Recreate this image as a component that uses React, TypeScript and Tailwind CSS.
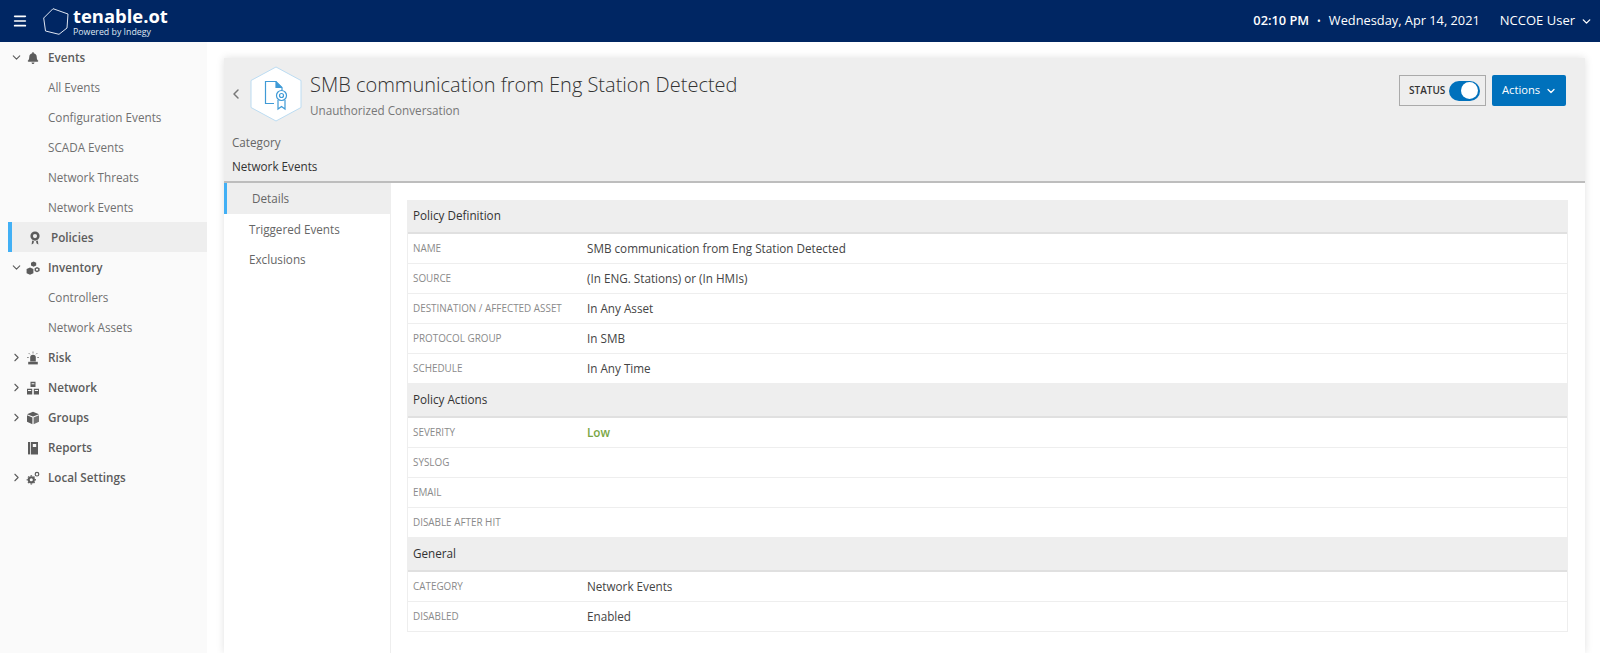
import React from "react";
import { FaBell } from "react-icons/fa";
import { ChevronDown, ChevronRight, ChevronLeft, Menu } from "lucide-react";

const box = "w-[14px] h-[14px]";
const Medal = () => (
  <svg viewBox="0 0 14 14" className={box} fill="currentColor">
    <path fillRule="evenodd" d="M7 0.5a4.6 4.6 0 1 1 0 9.2a4.6 4.6 0 0 1 0-9.2zM7 3a2.1 2.1 0 1 0 0 4.2A2.1 2.1 0 0 0 7 3z" />
    <path d="M4.2 9.5L3.6 13.5L5.4 12.4L6 10.2zM9.8 9.5L10.4 13.5L8.6 12.4L8 10.2z" />
  </svg>
);
const Cubes = () => (
  <svg viewBox="0 0 14 14" className={box} fill="currentColor">
    <path d="M7.6 0.6L10.2 1.8V4.6L7.6 5.8L5 4.6V1.8z" />
    <path d="M4 6.4L7.4 8V12.2L4 13.8L0.6 12.2V8z" />
    <path fillRule="evenodd" d="M11 6L13.6 7.2V10L11 11.2L8.6 10V7.2zM11 7.5L10 8V9.2L11 9.7L12.1 9.2V8z" />
  </svg>
);
const Siren = () => (
  <svg viewBox="0 0 14 14" className={box} fill="currentColor">
    <path d="M4.2 6.5a2.8 2.8 0 0 1 5.6 0V10.5H4.2z" />
    <rect x="2.2" y="10.8" width="9.6" height="2.6" />
    <path d="M7 0.5v2M2.6 2l1.3 1.3M11.4 2L10.1 3.3M1 6.5h1.8M11.2 6.5H13" stroke="currentColor" strokeWidth="0.7" fill="none" />
  </svg>
);
const Net = () => (
  <svg viewBox="0 0 14 14" className={box} fill="currentColor">
    <path fillRule="evenodd" d="M4.5 0.8H9.5V6H4.5zM5.6 2.2V3.2H8.4V2.2z" />
    <path fillRule="evenodd" d="M1 7.8H6.2V13.4H1zM2 9V10H5.2V9z" />
    <path fillRule="evenodd" d="M7.8 7.8H13V13.4H7.8zM8.8 9V10H12V9z" />
  </svg>
);
const Box = () => (
  <svg viewBox="0 0 14 14" className={box} fill="currentColor">
    <path d="M7 0.8L13 3.2L7 5.6L1 3.2z" />
    <path d="M1 4.3L6.4 6.5V13.2L1 10.8z" />
    <path d="M13 4.3L7.6 6.5V13.2L13 10.8z" opacity="0.85" />
  </svg>
);
const Notebook = () => (
  <svg viewBox="0 0 14 14" className={box} fill="currentColor">
    <rect x="2" y="1" width="2" height="12.4" />
    <path fillRule="evenodd" d="M4.8 1H12V13.4H4.8zM6.8 3v3h3.4V3z" />
  </svg>
);
const Gears = () => (
  <svg viewBox="0 0 14 14" className={box} fill="none" stroke="currentColor">
    <circle cx="5.3" cy="8.8" r="2.6" strokeWidth="2.1" />
    <g strokeWidth="1.6">
      <path d="M5.3 4.2v1M5.3 12.4v1M.7 8.8h1M8.9 8.8h1M2.1 5.6l.7.7M7.8 11.3l.7.7M8.5 5.6l-.7.7M2.8 11.3l-.7.7" />
    </g>
    <circle cx="11" cy="3.2" r="1.8" strokeWidth="1.2" />
  </svg>
);

type Item = { label: string; icon?: React.ReactNode; chev?: "down" | "right"; sub?: boolean; active?: boolean };
const items: Item[] = [
  { label: "Events", icon: <FaBell size={12} />, chev: "down" },
  { label: "All Events", sub: true },
  { label: "Configuration Events", sub: true },
  { label: "SCADA Events", sub: true },
  { label: "Network Threats", sub: true },
  { label: "Network Events", sub: true },
  { label: "Policies", icon: <Medal />, active: true },
  { label: "Inventory", icon: <Cubes />, chev: "down" },
  { label: "Controllers", sub: true },
  { label: "Network Assets", sub: true },
  { label: "Risk", icon: <Siren />, chev: "right" },
  { label: "Network", icon: <Net />, chev: "right" },
  { label: "Groups", icon: <Box />, chev: "right" },
  { label: "Reports", icon: <Notebook /> },
  { label: "Local Settings", icon: <Gears />, chev: "right" },
];

function SideRow({ it }: { it: Item }) {
  if (it.sub) {
    return <div className="h-[30px] flex items-center pl-[48px] pt-[1px] text-[11.7px] text-[#707070]">{it.label}</div>;
  }
  if (it.active) {
    return (
      <div className="h-[30px] ml-[8px] flex items-center bg-[#eeeeee] border-l-4 border-[#42b0f5] pl-[16px] pt-[1px] text-[11.7px] font-semibold text-[#5c5c5c]">
        <span className="w-[14px] flex justify-center">{it.icon}</span>
        <span className="ml-[9px]">{it.label}</span>
      </div>
    );
  }
  return (
    <div className="h-[30px] flex items-center pl-[10px] pt-[1px] text-[11.7px] font-semibold text-[#5c5c5c]">
      <span className="w-[16px] flex">
        {it.chev === "down" && <ChevronDown size={13} strokeWidth={2} />}
        {it.chev === "right" && <ChevronRight size={13} strokeWidth={2} />}
      </span>
      <span className="w-[14px] flex justify-center">{it.icon}</span>
      <span className="ml-[8px]">{it.label}</span>
    </div>
  );
}

const Section = ({ title }: { title: string }) => (
  <div className="h-[34px] flex items-center pl-[5px] bg-[#eeeeee] border-b-2 border-[#e0e0e0] text-[11.7px] font-medium text-[#333333]">
    {title}
  </div>
);
const Row = ({ k, v, green }: { k: string; v?: string; green?: boolean }) => (
  <div className="h-[30px] flex items-center border-b border-[#eeeeee] pl-[5px] bg-white">
    <div className="w-[174px] shrink-0 text-[9.9px] text-[#8a8a8a] uppercase">{k}</div>
    <div className={green ? "text-[11.7px] font-semibold text-[#79a644]" : "text-[11.7px] text-[#444444]"}>{v}</div>
  </div>
);

export default function App() {
  return (
    <div className="h-screen overflow-hidden flex flex-col bg-white font-['Open_Sans',sans-serif]">
      <header className="h-[42px] shrink-0 bg-[#002663] flex items-center text-white">
        <Menu size={16} strokeWidth={2.5} className="ml-[12px]" />
        <svg viewBox="0 0 26 27" className="w-[26px] h-[27px] ml-[15px]" fill="none" stroke="#dfe6f2" strokeWidth="1">
          <path d="M10 0.7 L25 6 L24 20 L16 26.3 L2.5 23 L0.7 10 Z" />
        </svg>
        <div className="ml-[4px] flex flex-col leading-none">
          <span className="text-[18.4px] font-bold leading-[22px]">tenable.ot</span>
          <span className="text-[8.8px] leading-[10px] text-[#dfe6f2]">Powered by Indegy</span>
        </div>
        <div className="ml-auto flex items-center text-[12.8px]">
          <span className="font-semibold">02:10 PM</span>
          <span className="mx-[8px] text-[10px]">•</span>
          <span>Wednesday, Apr 14, 2021</span>
          <span className="ml-[20px] text-[13px]">NCCOE User</span>
          <ChevronDown size={13} strokeWidth={2.5} className="ml-[5px] mr-[7px]" />
        </div>
      </header>
      <div className="flex-1 flex min-h-0">
        <aside className="w-[207px] shrink-0 bg-[#fafafa]">
          {items.map((it) => (
            <SideRow key={it.label} it={it} />
          ))}
        </aside>
        <main className="flex-1 min-w-0 pl-[17px] pr-[15px] pt-[16px]">
          <div className="h-full flex flex-col shadow-[0_0_8px_rgba(0,0,0,0.12)] bg-white">
            <div className="h-[125px] shrink-0 bg-[#eeeeee] border-b-2 border-[#bdbdbd]">
              <div className="flex items-start h-[72px]">
                <ChevronLeft size={16} strokeWidth={2.2} className="ml-[4px] mt-[28px] text-[#777777]" />
                <svg viewBox="0 0 52 56" className="w-[52px] h-[56px] ml-[6px] mt-[8px] shrink-0">
                  <path d="M26 1 L51 14.5 V41.5 L26 55 L1 41.5 V14.5 Z" fill="#ffffff" stroke="#bcdcf2" strokeWidth="1" />
                  <g fill="none" stroke="#3f9ad6" strokeWidth="1.2">
                    <path d="M24 37.5 H15.5 V15.5 H26 L32 21.5 V24.5" />
                    <path d="M26 15.5 V21.5 H32" fill="#3f9ad6" />
                    <circle cx="31.5" cy="29.5" r="5" />
                    <circle cx="31.5" cy="29.5" r="2" />
                    <path d="M28 34 V43 L31.5 40.5 L35 43 V34" />
                  </g>
                </svg>
                <div className="ml-[8px] mt-[11px]">
                  <div className="text-[20px] font-light leading-[32px] text-[#333333]">SMB communication from Eng Station Detected</div>
                  <div className="text-[11.7px] leading-[17px] mt-[1px] text-[#777777]">Unauthorized Conversation</div>
                </div>
                <div className="ml-auto mt-[17px] mr-[19px] flex">
                  <div className="w-[87px] h-[31px] border border-[#aaaaaa] flex items-center pl-[9px]">
                    <span className="text-[10px] font-semibold text-[#333333]">STATUS</span>
                    <span className="ml-[4px] w-[31px] h-[20px] rounded-full bg-[#0071bc] flex items-center justify-end pr-[2px]">
                      <span className="w-[17px] h-[17px] rounded-full bg-white" />
                    </span>
                  </div>
                  <div className="ml-[6px] w-[74px] h-[31px] rounded-[2px] bg-[#0071bc] text-white text-[11.2px] flex items-center pl-[10px]">
                    Actions
                    <ChevronDown size={12} strokeWidth={2.5} className="ml-[5px]" />
                  </div>
                </div>
              </div>
              <div className="pl-[8px] text-[11.7px] leading-[24px] text-[#666666]">Category</div>
              <div className="pl-[8px] text-[11.7px] leading-[24px] text-[#333333]">Network Events</div>
            </div>
            <div className="flex-1 flex min-h-0">
              <nav className="w-[167px] shrink-0 border-r border-[#eeeeee]">
                <div className="h-[31px] flex items-center bg-[#eeeeee] border-l-[3px] border-[#42b0f5] pl-[25px] pt-[1px] text-[11.7px] text-[#666666]">Details</div>
                <div className="h-[30px] flex items-center pl-[25px] pt-[1px] text-[11.7px] text-[#666666]">Triggered Events</div>
                <div className="h-[30px] flex items-center pl-[25px] pt-[1px] text-[11.7px] text-[#666666]">Exclusions</div>
              </nav>
              <div className="flex-1 min-w-0 pt-[17px] pl-[16px] pr-[17px]">
                <div className="border-x border-[#eeeeee]">
                  <Section title="Policy Definition" />
                  <Row k="Name" v="SMB communication from Eng Station Detected" />
                  <Row k="Source" v="(In ENG. Stations) or (In HMIs)" />
                  <Row k="Destination / Affected Asset" v="In Any Asset" />
                  <Row k="Protocol Group" v="In SMB" />
                  <Row k="Schedule" v="In Any Time" />
                  <Section title="Policy Actions" />
                  <Row k="Severity" v="Low" green />
                  <Row k="Syslog" />
                  <Row k="Email" />
                  <Row k="Disable after hit" />
                  <Section title="General" />
                  <Row k="Category" v="Network Events" />
                  <Row k="Disabled" v="Enabled" />
                </div>
              </div>
            </div>
          </div>
        </main>
      </div>
    </div>
  );
}
